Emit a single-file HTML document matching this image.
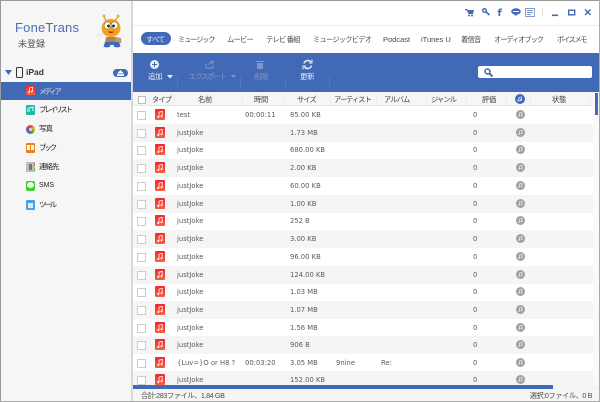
<!DOCTYPE html>
<html lang="ja"><head><meta charset="utf-8"><style>
html,body{margin:0;padding:0;background:#fff}
#w{position:relative;width:600px;height:402px;overflow:hidden;background:#fff;font-family:"Liberation Sans","Noto Sans CJK JP",sans-serif;font-size:6.5px;color:#555}
#w div,#w span,#w svg,#w i{position:absolute;white-space:nowrap}
.blur{filter:blur(.3px)}
.t{top:34px;line-height:12px;font-size:7.2px;letter-spacing:-.7px;color:#4a4a4a}
.b{color:#e4eaf6;font-size:7.5px;letter-spacing:-.4px;line-height:10px}
.d{color:#7f96c8}
.sep{width:1px;background:#5575b8;top:77px;height:11px}
.h{top:94px;line-height:12px;font-size:7.2px;letter-spacing:-.8px;color:#3c3c3c}
.hs{top:94px;width:1px;height:11px;background:#ededed}
.r{left:133px;width:460px;height:18px;filter:blur(.25px)}
.g{background:#f5f5f5}
.r span{top:0;line-height:18px;color:#5c5c5c;font-family:"DejaVu Sans",sans-serif;font-size:6.8px}
.c{left:4px;top:5px;width:7px;height:7px;border:1px solid #ccc;background:#fff}
.m{left:22px;top:3px}
.o{left:383px;top:4px}
.s{left:39px;line-height:10px;font-size:7.5px;letter-spacing:-1px;color:#222}
.k{letter-spacing:-2.2px}
</style></head><body><div id="w">

<svg width="0" height="0" style="left:0;top:0">
<defs><linearGradient id="rg" x1="0" y1="0" x2="0" y2="1"><stop offset="0" stop-color="#f4262c"/><stop offset="1" stop-color="#f9603c"/></linearGradient></defs>
<symbol id="note" viewBox="0 0 10 11"><rect width="10" height="11" rx="1" fill="url(#rg)"/><path d="M4 8V3.200l3.200-.8V7" stroke="#fff" fill="none" stroke-width=".8"/><circle cx="3.300" cy="8" r="1" fill="#fff"/><circle cx="6.500" cy="7.200" r="1" fill="#fff"/></symbol>
<symbol id="disc" viewBox="0 0 9 9"><circle cx="4.500" cy="4.500" r="4.500" fill="#a0a0a0"/><path d="M3.500 6V3l2.500-.7V5.500" stroke="#e6e6e6" fill="none" stroke-width=".8"/><circle cx="3" cy="6" r=".8" fill="#e6e6e6"/><circle cx="5.500" cy="5.500" r=".8" fill="#e6e6e6"/></symbol>
</svg>

<!-- sidebar -->
<div style="left:0;top:0;width:132px;height:402px;background:#f6f6f6"></div>
<div style="left:0;top:0;width:1px;height:402px;background:#9a9a9a"></div>
<div style="left:131px;top:0;width:2px;height:402px;background:#d8d8d8"></div>
<div style="left:0;top:0;width:600px;height:1px;background:#999"></div>
<div style="left:599px;top:0;width:1px;height:402px;background:#aaa"></div>
<div style="left:0;top:401px;width:600px;height:1px;background:#aaa"></div>

<div class="blur" style="left:15px;top:20px;font-size:13px;line-height:16px;color:#4a6eb5;letter-spacing:.2px">FoneTrans</div>
<div class="blur" style="left:18px;top:38px;font-size:9px;line-height:12px;color:#555">未登録</div>

<!-- bee mascot -->
<svg class="blur" style="left:96px;top:13px" width="34" height="36" viewBox="0 0 34 36">
<path d="M10 8 8 3M19 8l3-5" stroke="#b88020" stroke-width="1" fill="none"/>
<circle cx="8" cy="3" r="1.500" fill="#f4b020"/><circle cx="22" cy="3" r="1.500" fill="#f4b020"/>
<path d="M1 20.500 13 19v3L2 24z" fill="#eeeeee"/>
<path d="M10 24h11l1.500 6H9z" fill="#a9835a"/>
<path d="M19 24l6 1 .5 5-6 1z" fill="#c29a6c"/>
<path d="M9 29h14l1 3H8z" fill="#3f68b8"/>
<ellipse cx="11" cy="33" rx="3.500" ry="1.400" fill="#3f68b8"/><ellipse cx="21" cy="33" rx="3.500" ry="1.400" fill="#3f68b8"/>
<ellipse cx="15" cy="15" rx="9.500" ry="9" fill="#f6a316"/>
<ellipse cx="11.500" cy="12.500" rx="3.400" ry="3.700" fill="#fff" stroke="#8a6a30" stroke-width=".6"/><ellipse cx="18.500" cy="12.500" rx="3.400" ry="3.700" fill="#fff" stroke="#8a6a30" stroke-width=".6"/>
<circle cx="12.500" cy="13" r="1.500" fill="#333"/><circle cx="17.500" cy="13" r="1.500" fill="#333"/>
<path d="M11.500 18.500q3.500 3.500 7 0z" fill="#a8341a"/>
</svg>

<!-- iPad row -->
<svg style="left:5px;top:70px" width="7" height="5"><path d="M0 0h7L3.500 5z" fill="#3f68b8"/></svg>
<div style="left:16px;top:67px;width:7px;height:11px;border:1.200px solid #333;border-radius:1.500px;background:#f4f4f4;box-sizing:border-box"></div>
<div class="blur" style="left:26px;top:66px;font-size:8.500px;font-weight:bold;line-height:13px;color:#333">iPad</div>
<div style="left:113px;top:69px;width:15px;height:8px;background:#4269b5;border-radius:4px"></div>
<svg style="left:117px;top:70px" width="7" height="6"><path d="M3.500 0 7 3.500H0zM0 4.300h7V6H0z" fill="#fff"/></svg>

<!-- active row -->
<div style="left:1px;top:82px;width:130px;height:18px;background:#4269b5"></div>

<!-- sidebar items -->
<svg style="left:26px;top:85px" width="9" height="10"><use href="#note"/></svg>
<div class="blur" style="left:39px;top:87px;line-height:10px;font-size:7.500px;letter-spacing:-2.200px;color:#d5def0">メディア</div>

<div style="left:26px;top:105px;width:9px;height:10px;background:#22b8a8;border-radius:1px"></div>
<svg style="left:27px;top:106px" width="7" height="8" fill="none" stroke="#e8fff8"><path d="M2 6V2l4-1v4"/><path d="M0 3h1M0 5h1" /></svg>
<div class="blur s k" style="top:105px">プレイリスト</div>

<div style="left:26px;top:125px;width:9px;height:9px;border-radius:50%;background:conic-gradient(#f04030,#f0b020,#40b040,#4070d0,#a040b0,#f04030)"></div>
<div style="left:29px;top:128px;width:3px;height:3px;border-radius:50%;background:#ddd"></div>
<div class="blur s" style="top:124px">写真</div>

<div style="left:26px;top:143px;width:9px;height:10px;background:#f08018;border-radius:1px"></div>
<div style="left:27px;top:145px;width:3px;height:5px;background:#fff"></div><div style="left:31px;top:145px;width:3px;height:5px;background:#fff"></div>
<div class="blur s k" style="top:143px">ブック</div>

<div style="left:26px;top:162px;width:9px;height:10px;background:#bdbdbd"></div>
<div style="left:29px;top:164px;width:3px;height:6px;background:#777"></div>
<div style="left:34px;top:163px;width:1px;height:8px;background:linear-gradient(#e04040,#e0c040,#40a0e0)"></div>
<div class="blur s" style="top:162px">連絡先</div>

<div style="left:26px;top:181px;width:9px;height:10px;background:#3ccf30;border-radius:2px"></div>
<div style="left:27px;top:182px;width:7px;height:6px;background:#f4fff0;border-radius:50%"></div>
<div class="blur s" style="top:181px;font-size:7px;letter-spacing:0">SMS</div>

<div style="left:26px;top:200px;width:9px;height:10px;background:#4aa0ee;border-radius:1px"></div>
<div style="left:28px;top:203px;width:5px;height:5px;background:#d8ecfc"></div>
<div class="blur s k" style="top:200px">ツール</div>

<!-- top right icons -->
<svg class="blur" style="left:465px;top:8px" width="130" height="12" viewBox="0 0 130 12" fill="#4269b5">
<path d="M0 1h2l1 1h6L8 6H3.500L2 2.500 0 2z"/><circle cx="4" cy="7.500" r="1"/><circle cx="7" cy="7.500" r="1"/>
<circle cx="19.500" cy="2.500" r="1.800" fill="none" stroke="#4269b5" stroke-width="1.400"/><path d="M21 4l3.500 3" stroke="#4269b5" stroke-width="1.800"/>
<path d="M33.500 8V4h-1V2.700h1q0-2.200 2.200-2.200H37v1.300h-.8q-1 0-1 .9h1.700L36.700 4H35.200v4z"/>
<ellipse cx="51" cy="3.500" rx="4.800" ry="3.200"/><path d="M49 6h3l-1 2.300z"/><rect x="48" y="3" width="6" height="1" fill="#fff"/>
<path d="M60.500.5h9v8h-9zM62 2.500h6M62 4.500h6M62 6.500h4" fill="none" stroke="#7f9acb" stroke-width=".9"/>
<rect x="77" y="0" width="1" height="8" fill="#ddd"/>
<rect x="87" y="6.500" width="6" height="1.600"/>
<rect x="103.700" y="2.200" width="6" height="4.600" fill="none" stroke="#4269b5" stroke-width="1.400"/>
<path d="M120 1.500l5.500 5.500M125.500 1.500 120 7" stroke="#4269b5" stroke-width="1.400" fill="none"/>
</svg>
<div style="left:133px;top:25px;width:466px;height:1px;background:#ececec"></div>

<!-- tabs -->
<div style="left:141px;top:32px;width:30px;height:13px;background:#4269b5;border-radius:7px"></div>
<div class="blur">
<span class="t" style="left:146px;color:#e8eef8">すべて</span>
<span class="t" style="left:178px;letter-spacing:-1.100px">ミュージック</span>
<span class="t" style="left:227px">ムービー</span>
<span class="t" style="left:266px">テレビ 番組</span>
<span class="t" style="left:313px">ミュージックビデオ</span>
<span class="t" style="left:383px;font-size:7.500px;letter-spacing:0">Podcast</span>
<span class="t" style="left:421px;font-size:7.500px;letter-spacing:0">iTunes U</span>
<span class="t" style="left:461px">着信音</span>
<span class="t" style="left:494px;letter-spacing:-1px">オーディオブック</span>
<span class="t" style="left:557px;letter-spacing:-1.300px">ボイスメモ</span>
</div>

<!-- toolbar -->
<div style="left:133px;top:53px;width:466px;height:39px;background:#4269b5"></div>
<div style="left:150px;top:60px;width:9px;height:9px;border-radius:50%;background:#e8eef8"></div>
<div style="left:152px;top:64px;width:5px;height:1px;background:#4269b5"></div><div style="left:154px;top:62px;width:1px;height:5px;background:#4269b5"></div>
<div class="blur b" style="left:148px;top:72px">追加</div>
<svg style="left:167px;top:75px" width="6" height="4"><path d="M0 0h6L3 3.500z" fill="#e8eef8"/></svg>
<div class="sep" style="left:177px"></div>
<svg style="left:205px;top:60px" width="10" height="9" fill="none" stroke="#7f96c8"><path d="M1 4v4h7V5M4 5q0-3 4-3M6.500.5 8.500 2 6.500 4"/></svg>
<div class="blur b d" style="left:189px;top:72px;letter-spacing:-1.300px">エクスポート</div>
<svg style="left:231px;top:75px" width="5" height="3"><path d="M0 0h5L2.500 3z" fill="#7f96c8"/></svg>
<div class="sep" style="left:240px"></div>
<svg style="left:256px;top:60px" width="8" height="9" fill="#7f96c8"><path d="M0 1h8v1H0zM1 3h6v6H1z"/></svg>
<div class="blur b d" style="left:254px;top:72px">削除</div>
<div class="sep" style="left:285px"></div>
<svg style="left:302px;top:59px" width="11" height="11" fill="none" stroke="#e8eef8" stroke-width="1.500"><path d="M2 4.500a4 4 0 0 1 7-1.500M9.500 6.500a4 4 0 0 1-7 1.500"/><path d="M10 .5v3.500H7M1 10.500V7h3" stroke-width="1"/></svg>
<div class="blur b" style="left:300px;top:72px">更新</div>
<div class="sep" style="left:329px"></div>
<div style="left:478px;top:66px;width:114px;height:12px;background:#fff;border-radius:2px"></div>
<svg style="left:484px;top:68px" width="9" height="9"><circle cx="3.500" cy="3.500" r="2.500" fill="none" stroke="#4269b5" stroke-width="1.500"/><path d="M5.500 5.500 8.500 8.500" stroke="#4269b5" stroke-width="2"/></svg>

<!-- header -->
<div style="left:133px;top:92px;width:460px;height:14px;background:#f6f6f6"></div>
<div style="left:133px;top:105px;width:460px;height:1px;background:#e6e6e6"></div>
<div style="left:138px;top:96px;width:6px;height:6px;border:1px solid #bbb;background:#fff"></div>
<div class="blur">
<span class="h" style="left:152px">タイプ</span>
<span class="h" style="left:198px;letter-spacing:-.2px">名前</span>
<span class="h" style="left:254px;letter-spacing:-.2px">時間</span>
<span class="h" style="left:297px">サイズ</span>
<span class="h" style="left:334px;letter-spacing:-.9px">アーティスト</span>
<span class="h" style="left:384px">アルバム</span>
<span class="h" style="left:431px">ジャンル</span>
<span class="h" style="left:482px;letter-spacing:-.2px">評価</span>
<span class="h" style="left:552px;letter-spacing:-.2px">状態</span>
</div>
<div class="hs" style="left:149px"></div><div class="hs" style="left:174px"></div><div class="hs" style="left:242px"></div><div class="hs" style="left:284px"></div><div class="hs" style="left:330px"></div><div class="hs" style="left:376px"></div><div class="hs" style="left:426px"></div><div class="hs" style="left:466px"></div><div class="hs" style="left:506px"></div><div class="hs" style="left:530px"></div><div class="hs" style="left:590px"></div>
<div style="left:515px;top:94px;width:10px;height:10px;border-radius:50%;background:#3f68b8"></div>
<svg style="left:517px;top:96px" width="6" height="6" fill="none" stroke="#dde" stroke-width=".8"><path d="M2 4.500V1.500L4.500 1v3"/><circle cx="1.500" cy="4.500" r=".7"/><circle cx="4" cy="4" r=".7"/></svg>

<!-- rows -->
<div class="r" style="top:106px"><i class="c"></i><svg class="m" width="10" height="11"><use href="#note"/></svg><span style="left:44px">test</span><span style="left:112px">00:00:11</span><span style="left:157px">85.00 KB</span><span style="left:340px">0</span><svg class="o" width="9" height="9"><use href="#disc"/></svg></div>
<div class="r g" style="top:124px"><i class="c"></i><svg class="m" width="10" height="11"><use href="#note"/></svg><span style="left:44px">justJoke</span><span style="left:157px">1.73 MB</span><span style="left:340px">0</span><svg class="o" width="9" height="9"><use href="#disc"/></svg></div>
<div class="r" style="top:141px"><i class="c"></i><svg class="m" width="10" height="11"><use href="#note"/></svg><span style="left:44px">justJoke</span><span style="left:157px">680.00 KB</span><span style="left:340px">0</span><svg class="o" width="9" height="9"><use href="#disc"/></svg></div>
<div class="r g" style="top:159px"><i class="c"></i><svg class="m" width="10" height="11"><use href="#note"/></svg><span style="left:44px">justJoke</span><span style="left:157px">2.00 KB</span><span style="left:340px">0</span><svg class="o" width="9" height="9"><use href="#disc"/></svg></div>
<div class="r" style="top:177px"><i class="c"></i><svg class="m" width="10" height="11"><use href="#note"/></svg><span style="left:44px">justJoke</span><span style="left:157px">60.00 KB</span><span style="left:340px">0</span><svg class="o" width="9" height="9"><use href="#disc"/></svg></div>
<div class="r g" style="top:195px"><i class="c"></i><svg class="m" width="10" height="11"><use href="#note"/></svg><span style="left:44px">justJoke</span><span style="left:157px">1.00 KB</span><span style="left:340px">0</span><svg class="o" width="9" height="9"><use href="#disc"/></svg></div>
<div class="r" style="top:212px"><i class="c"></i><svg class="m" width="10" height="11"><use href="#note"/></svg><span style="left:44px">justJoke</span><span style="left:157px">252 B</span><span style="left:340px">0</span><svg class="o" width="9" height="9"><use href="#disc"/></svg></div>
<div class="r g" style="top:230px"><i class="c"></i><svg class="m" width="10" height="11"><use href="#note"/></svg><span style="left:44px">justJoke</span><span style="left:157px">3.00 KB</span><span style="left:340px">0</span><svg class="o" width="9" height="9"><use href="#disc"/></svg></div>
<div class="r" style="top:248px"><i class="c"></i><svg class="m" width="10" height="11"><use href="#note"/></svg><span style="left:44px">justJoke</span><span style="left:157px">96.00 KB</span><span style="left:340px">0</span><svg class="o" width="9" height="9"><use href="#disc"/></svg></div>
<div class="r g" style="top:266px"><i class="c"></i><svg class="m" width="10" height="11"><use href="#note"/></svg><span style="left:44px">justJoke</span><span style="left:157px">124.00 KB</span><span style="left:340px">0</span><svg class="o" width="9" height="9"><use href="#disc"/></svg></div>
<div class="r" style="top:283px"><i class="c"></i><svg class="m" width="10" height="11"><use href="#note"/></svg><span style="left:44px">justJoke</span><span style="left:157px">1.03 MB</span><span style="left:340px">0</span><svg class="o" width="9" height="9"><use href="#disc"/></svg></div>
<div class="r g" style="top:301px"><i class="c"></i><svg class="m" width="10" height="11"><use href="#note"/></svg><span style="left:44px">justJoke</span><span style="left:157px">1.07 MB</span><span style="left:340px">0</span><svg class="o" width="9" height="9"><use href="#disc"/></svg></div>
<div class="r" style="top:319px"><i class="c"></i><svg class="m" width="10" height="11"><use href="#note"/></svg><span style="left:44px">justJoke</span><span style="left:157px">1.56 MB</span><span style="left:340px">0</span><svg class="o" width="9" height="9"><use href="#disc"/></svg></div>
<div class="r g" style="top:336px"><i class="c"></i><svg class="m" width="10" height="11"><use href="#note"/></svg><span style="left:44px">justJoke</span><span style="left:157px">906 B</span><span style="left:340px">0</span><svg class="o" width="9" height="9"><use href="#disc"/></svg></div>
<div class="r" style="top:354px"><i class="c"></i><svg class="m" width="10" height="11"><use href="#note"/></svg><span style="left:44px">{Luv=}O or H8 ?</span><span style="left:112px">00:03:20</span><span style="left:157px">3.05 MB</span><span style="left:203px">9nine</span><span style="left:248px">Re:</span><span style="left:340px">0</span><svg class="o" width="9" height="9"><use href="#disc"/></svg></div>
<div class="r g" style="top:371px;height:14px;overflow:hidden"><i class="c"></i><svg class="m" width="10" height="11"><use href="#note"/></svg><span style="left:44px">justJoke</span><span style="left:157px">152.00 KB</span><span style="left:340px">0</span><svg class="o" width="9" height="9"><use href="#disc"/></svg></div>

<!-- scrollbars -->
<div style="left:593px;top:92px;width:6px;height:298px;background:#fafafa"></div>
<div style="left:595px;top:93px;width:3px;height:22px;background:#4269b5"></div>
<div style="left:133px;top:385px;width:466px;height:5px;background:#f4f4f4"></div>
<div style="left:133px;top:385px;width:420px;height:4px;background:#4269b5"></div>

<!-- status -->
<div style="left:133px;top:390px;width:466px;height:11px;background:#f5f5f5"></div>
<div class="blur" style="left:141px;top:390px;line-height:11px;font-size:7.200px;letter-spacing:-.4px;color:#4a4a4a">合計:283ファイル、1.84 GB</div>
<div class="blur" style="right:8px;top:390px;line-height:11px;font-size:7.200px;letter-spacing:-.4px;color:#4a4a4a">選択:0ファイル、0 B</div>

</div></body></html>
